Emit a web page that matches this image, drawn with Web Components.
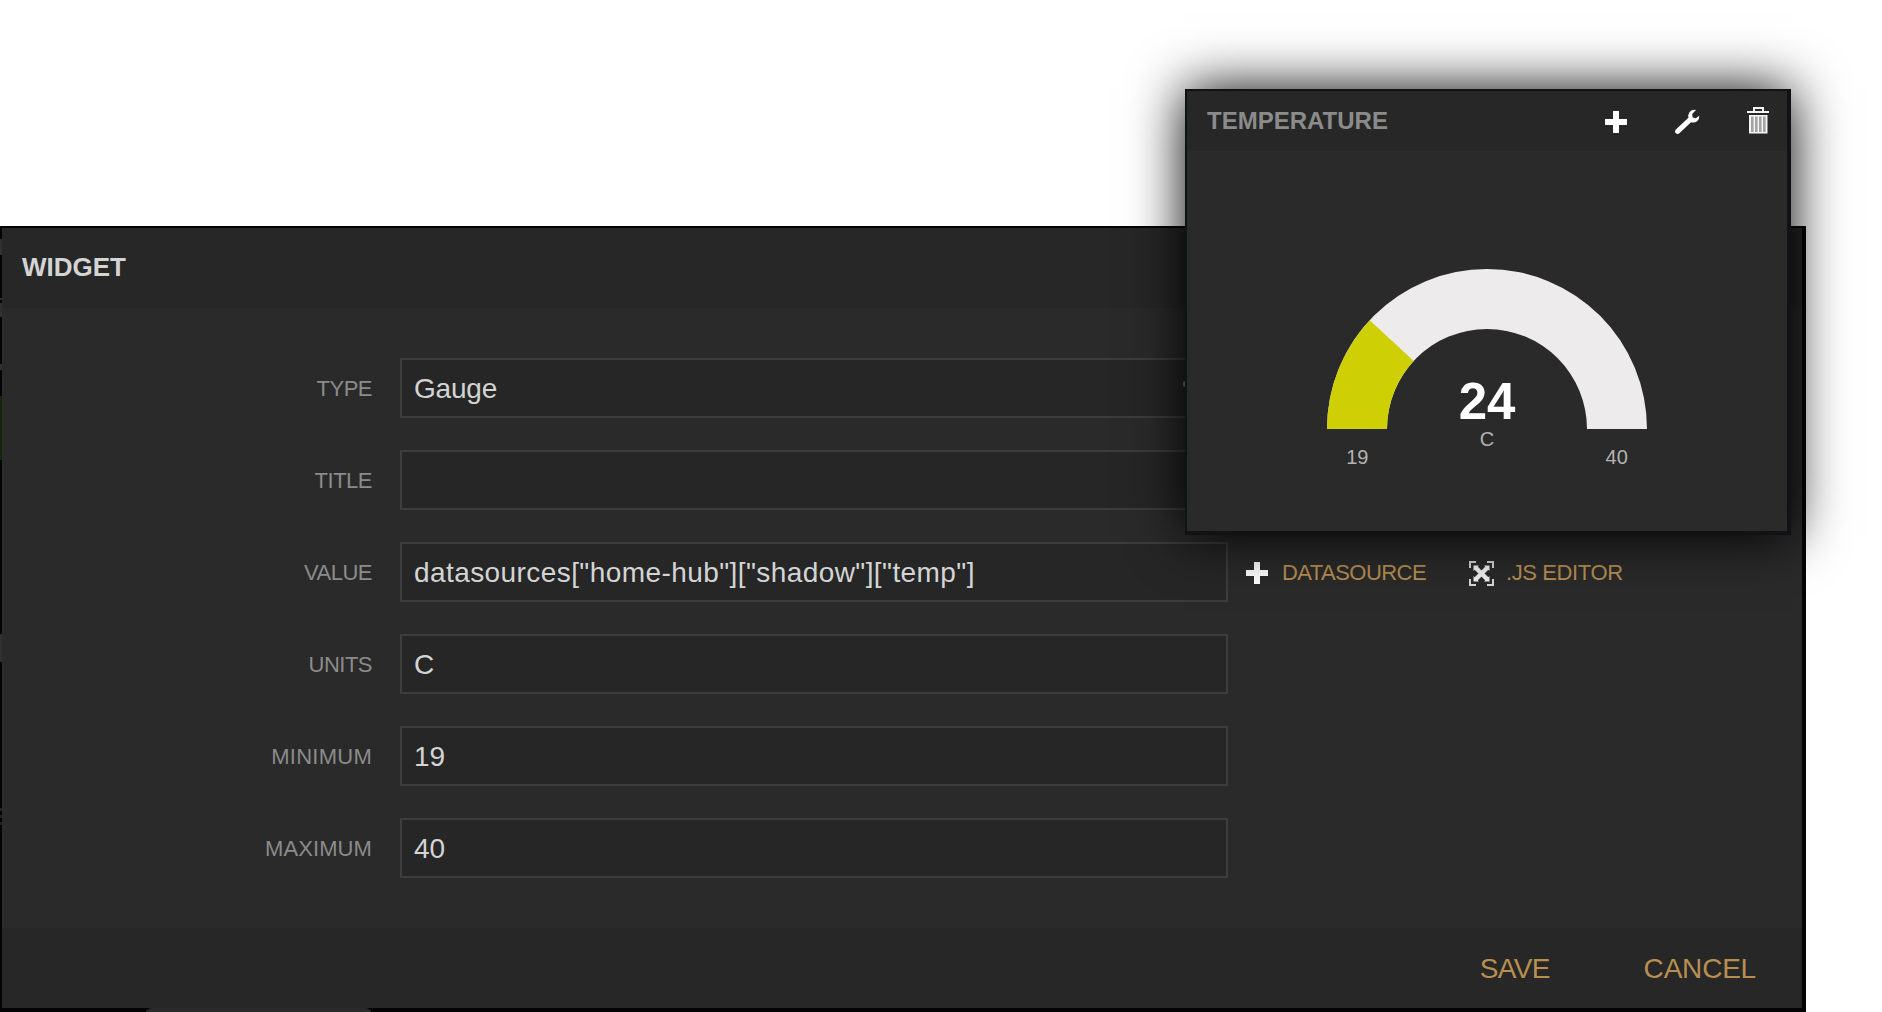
<!DOCTYPE html>
<html lang="en">
<head>
<meta charset="utf-8">
<title>Widget</title>
<style>
html,body{margin:0;width:1882px;height:1012px;overflow:hidden;background:#fff;font-family:"Liberation Sans",Arial,sans-serif}
</style>
</head>
<body>
<board-screen></board-screen>
<script>
const define = (name, html, init) => customElements.define(name, class extends HTMLElement {
  constructor() {
    super();
    const t = document.createElement('template');
    t.innerHTML = html;
    this.attachShadow({ mode: 'open' }).append(t.content.cloneNode(true));
  }
  connectedCallback() { if (init) init(this, this.shadowRoot); }
});

const icons = {
  plus: '<path fill="#fff" d="M9 1h6v8h8v6h-8v8H9v-8H1V9h8z"/>',
  wrench: '<path fill="#fff" d="M21 0q-4-.7-6.600 2.200-1.700 2.500-1 5.500L.6 19.800q-1.500 2 .2 3.500 1.900 1.400 3.600-.1L16 12.300q3.400.9 6.100-1.100 2.500-2 2.200-5.400L20.800 8.300 17.600 7.600 17.200 4z"/>',
  trash: '<g fill="#f4f4f4"><path d="M6 0h11v4h5v2H0V4h6zM8 2v2h7V2z" fill-rule="evenodd"/><path d="M2 8h18.500v18.500H2z"/></g><path fill="#a3a3a3" d="M4 9.500h2.600V25H4zm4 0h2.600V25H8zm4 0h2.600V25H12zm4 0h2.600V25H16z"/>',
  expand: '<g fill="none" stroke="#d8d8d8" stroke-width="2"><path d="M1 7V1h6M18 1h6v6M24 18v6h-6M7 24H1v-6"/></g><path stroke="#f2f2f2" stroke-width="4.500" d="M6.500 6.500l12 12M18.500 6.500l-12 12"/><path fill="#f2f2f2" d="M4.500 4.500h5.500L4.500 10zM20.500 4.500V10L15 4.500zM20.500 20.500H15l5.500-5.500zM4.500 20.500V15l5.500 5.500z"/>'
};

define('ui-icon', `<style>:host{display:block;flex:none}svg{display:block;overflow:visible}</style><svg></svg>`, (el, root) => {
  const svg = root.querySelector('svg');
  svg.setAttribute('width', el.getAttribute('w') || 24);
  svg.setAttribute('height', el.getAttribute('h') || 24);
  svg.innerHTML = icons[el.getAttribute('name')];
});

define('form-row', `<style>
:host{display:flex;height:60px;align-items:center}
label{width:370px;padding-top:2px;text-align:right;font-size:22px;line-height:28px;color:#8b8b8b;white-space:nowrap;letter-spacing:var(--label-spacing,-.5px)}
.field{box-sizing:border-box;margin-left:28px;width:828px;height:60px;border:2px solid #3d3d3d;background:#262626;color:#d3d4d4;padding:2px 12px 0;display:flex;align-items:center;font-size:28px;line-height:54px;white-space:pre;letter-spacing:var(--field-spacing,0)}
</style><label></label><div class="field"><slot></slot></div><slot name="tools"></slot>`, (el, root) => {
  root.querySelector('label').textContent = el.getAttribute('label');
});

define('tool-link', `<style>
:host{display:flex;align-items:center;color:#b88f51;font-size:22px;white-space:nowrap;padding-top:2px}
</style><slot name="icon"></slot><span><slot></slot></span>`);

define('widget-dialog', `<style>
:host{box-sizing:border-box;display:flex;flex-direction:column;width:1806px;height:786px;border:solid #040404;border-width:2px 4px 4px 2px;background:#2a2a2a}
header{height:80px;background:#272727;color:#d3d4d4;font-weight:bold;font-size:26px;line-height:78px;padding-left:20px}
main{height:620px;box-sizing:border-box;padding-top:50px;display:flex;flex-direction:column;gap:32px}
footer{height:80px;background:#272727;display:flex;justify-content:flex-end;gap:94px;padding-right:46px;color:#b88f51;font-size:28px;line-height:81px}
.save{letter-spacing:-.7px}
.cancel{letter-spacing:-.2px}
tool-link.ds{margin-left:17px;letter-spacing:-.55px}
tool-link.js{margin-left:43px;letter-spacing:-.4px}
.ds ui-icon{margin-right:13px}.js ui-icon{margin-right:12px}
.long{--field-spacing:.42px}
.wide{--label-spacing:.1px}
</style>
<header>WIDGET</header>
<main>
<form-row label="TYPE" style="--field-spacing:-.2px">Gauge</form-row>
<form-row label="TITLE"></form-row>
<form-row label="VALUE" class="long">datasources["home-hub"]["shadow"]["temp"]<tool-link slot="tools" class="ds"><ui-icon slot="icon" name="plus"></ui-icon>DATASOURCE</tool-link><tool-link slot="tools" class="js"><ui-icon slot="icon" name="expand" w="25" h="25"></ui-icon>.JS EDITOR</tool-link></form-row>
<form-row label="UNITS">C</form-row>
<form-row label="MINIMUM" class="wide" style="--label-spacing:.25px">19</form-row>
<form-row label="MAXIMUM" class="wide">40</form-row>
</main>
<footer><span class="save">SAVE</span><span class="cancel">CANCEL</span></footer>`);

define('gauge-chart', `<style>:host{display:block}svg{display:block}text{font-family:"Liberation Sans",Arial,sans-serif;text-anchor:middle;fill:#b3b3b3;font-size:20px}.v{fill:#fff;font-size:51px;font-weight:bold}</style>
<svg width="600" height="380" viewBox="0 0 600 380">
<path fill="#edebeb" d="M140 278A160 160 0 0 1 460 278H400A100 100 0 0 0 200 278Z"/>
<path fill="#cecf05" d="M140 278A160 160 0 0 1 182.710 169.170L226.690 209.980A100 100 0 0 0 200 278Z"/>
<text class="v" x="300" y="268">24</text><text x="300" y="295">C</text><text x="170.300" y="313">19</text><text x="429.700" y="313">40</text>
</svg>`);

define('gauge-panel', `<style>
:host{box-sizing:border-box;display:block;width:606px;height:446px;border:solid #101315;border-width:2px 4px 4px 2px;background:#2a2a2a;box-shadow:0 0 52px #000}
header{height:60px;box-sizing:border-box;background:#272727;display:flex;align-items:center;color:#8b8b8b;font-weight:bold;font-size:24px;padding:2px 18px 0 20px}
.t{flex:1;margin-top:-2px}
.p{margin-right:47px}.w{margin-right:47px}
.d{margin-top:-3px}
gauge-chart{height:380px}
</style>
<header><span class="t">TEMPERATURE</span><ui-icon class="p" name="plus"></ui-icon><ui-icon class="w" name="wrench" w="25"></ui-icon><ui-icon class="d" name="trash" w="22" h="27"></ui-icon></header>
<gauge-chart></gauge-chart>`);

define('board-screen', `<style>
:host{display:block;position:relative;width:1882px;height:1012px;overflow:hidden;padding-top:226px;box-sizing:border-box}
gauge-panel{position:absolute;left:1185px;top:89px}
i{position:absolute;width:2px;left:0;background:#303030}
.tab{left:145px;top:1008px;width:227px;height:12px;background:#2a2a2a;border-radius:7px 7px 0 0}
.arrow{left:1183px;top:381px;width:4px;height:6px;border-radius:4px;background:#777}
</style>
<widget-dialog></widget-dialog>
<i style="top:239px;height:16px"></i><i style="top:298px;height:2px"></i><i style="top:303px;height:14px"></i><i style="top:364px;height:6px"></i><i style="top:396px;height:64px;background:#142708"></i><i style="top:634px;height:28px"></i><i style="top:808px;height:3px;background:#222"></i><i style="top:815px;height:3px;background:#222"></i><i style="top:822px;height:3px;background:#222"></i>
<i class="tab"></i><i class="arrow"></i>
<gauge-panel></gauge-panel>`);
</script>
</body>
</html>
